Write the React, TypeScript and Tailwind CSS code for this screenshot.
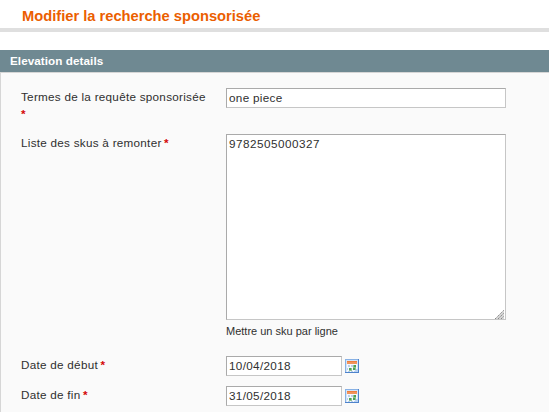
import type { ReactNode } from "react";

const fieldBox =
  "block rounded-none border border-solid border-t-[#aaaaaa] border-l-[#aaaaaa] border-r-[#c6c6c6] border-b-[#c6c6c6] bg-white text-[#2f2f2f] outline-none";

function CalendarIcon() {
  return (
    <svg width="14" height="14" viewBox="0 0 14 14" className="block">
      <path d="M0 0H14V14H0z" fill="#88b1e4" />
      <path d="M13 0h1v14H0v-1h13z" fill="#4e83cb" />
      <path d="M1 1H13V13H1z" fill="#d3e4f9" />
      <path d="M2 2H12V13H2z" fill="#f4f8fe" />
      <path d="M2 2H12V5H2z" fill="#f2935a" />
      <path d="M2 2H12V3H2z" fill="#ee7d3d" />
      <path d="M3 6h2v2H3zM6 6h2v2H6zM2 9h1v2H2zM3 12h2v1H3zM6 12h2v1H6z" fill="#bccfe8" />
      <path d="M8 6h3v3H8zM4 9h3v3H4zM8 9h3v2H8z" fill="#8dc38f" />
      <path d="M9 6h2v2H9zM4 9h2v2H4zM8 9h2v2H8z" fill="#4fa052" />
      <path d="M9 13V12h1v-1h1v-1h2v3z" fill="#b8d2f3" />
    </svg>
  );
}

function Row({ label, children, className }: { label: string; children: ReactNode; className: string }) {
  return (
    <div className={`flex items-start ${className}`}>
      <label className="block w-[205px] shrink-0 pr-[15px] text-[11.7px] leading-[17px] tracking-[0.27px] text-[#2f2f2f]">
        {label}
        <span className="font-bold tracking-[-0.8px] text-[#d40707]"> *</span>
      </label>
      {children}
    </div>
  );
}

function DateField({ value }: { value: string }) {
  return (
    <div className="flex items-center gap-[3px]">
      <input readOnly value={value} className={`${fieldBox} h-5 w-[116px] px-[2px] pb-[2px] text-[11.7px] tracking-[0.34px]`} />
      <CalendarIcon />
    </div>
  );
}

export default function App() {
  return (
    <div className="h-[412px] w-[549px] overflow-hidden bg-white font-['Liberation_Sans',Arial,sans-serif]">
      <header className="h-8 border-b-4 border-[#dfdfdf] pl-[22px] pt-[7px]">
        <h3 className="text-[14.7px] font-bold leading-[18px] text-[#eb5e00]">Modifier la recherche sponsorisée</h3>
      </header>
      <div className="mt-[18px] h-[22px] bg-[#6f8992] pl-[10px]">
        <h4 className="text-[11.7px] font-bold leading-[22px] tracking-[0.06px] text-white">Elevation details</h4>
      </div>
      <div className="h-[340px] border-l border-t border-[#d6d6d6] bg-[#fafafa] pl-5 pt-[15px]">
        <Row label="Termes de la requête sponsorisée" className="h-[46px]">
          <input readOnly value="one piece" className={`${fieldBox} h-5 w-[280px] px-[2px] pb-[2px] text-[11.7px] tracking-[0.32px]`} />
        </Row>
        <Row label="Liste des skus à remonter" className="h-[222px]">
          <div>
            <div className="relative">
              <textarea readOnly value="9782505000327" className={`${fieldBox} h-[186px] w-[280px] resize-none px-[2px] py-px text-[11.7px] leading-[15px] tracking-[0.5px]`} />
              <svg width="9" height="9" viewBox="0 0 9 9" className="absolute bottom-px right-[2px]">
                <path d="M0 9L9 0V9z" fill="#d6d6d6" />
                <path d="M0 9L9 0M3 9L9 3M6 9L9 6" stroke="#888888" strokeWidth="1" strokeDasharray="1.4 0.8" />
              </svg>
            </div>
            <p className="mt-1 text-[11px] leading-[15px] text-[#2f2f2f]">Mettre un sku par ligne</p>
          </div>
        </Row>
        <Row label="Date de début" className="h-[30px]">
          <DateField value="10/04/2018" />
        </Row>
        <Row label="Date de fin" className="h-5">
          <DateField value="31/05/2018" />
        </Row>
      </div>
    </div>
  );
}
